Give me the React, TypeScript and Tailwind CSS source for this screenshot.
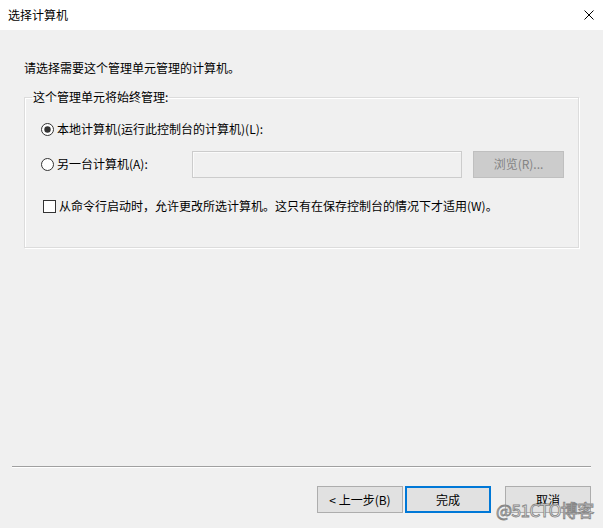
import React from 'react'

const font = { fontFamily: '"Microsoft YaHei UI", "Noto Sans CJK SC", "Noto Sans", sans-serif' }

function Radio({ checked }: { checked?: boolean }) {
  return (
    <svg width="13" height="13" viewBox="0 0 13 13" className="shrink-0">
      <circle cx="6.5" cy="6.5" r="6" fill="#fff" stroke="#333" strokeWidth="1" />
      {checked && <circle cx="6.5" cy="6.5" r="3.2" fill="#333" />}
    </svg>
  )
}

function Btn({ children, primary, disabled, className = '' }: { children: React.ReactNode; primary?: boolean; disabled?: boolean; className?: string }) {
  let cls = 'border border-[#adadad] bg-[#e1e1e1] text-black'
  if (primary) cls = 'border-2 border-[#0078d7] bg-[#e1e1e1] text-black'
  if (disabled) cls = 'border border-[#bfbfbf] bg-[#cccccc] text-[#838383]'
  return (
    <div className={`flex h-[27px] w-[86px] items-center justify-center text-[12px] leading-[16px] ${cls} ${className}`}>
      {children}
    </div>
  )
}

export default function App() {
  return (
    <div className="relative flex h-[528px] w-[603px] flex-col bg-[#f0f0f0] text-[12px] text-black" style={font}>
      {/* 標題列 */}
      <div className="flex h-[30px] shrink-0 items-center justify-between bg-white pl-[8px] pr-[9px]">
        <span className="leading-[16px]">选择计算机</span>
        <svg width="10" height="10" viewBox="0 0 10 10">
          <path d="M0.5 0.5 L9.5 9.5 M9.5 0.5 L0.5 9.5" stroke="#000" strokeWidth="1" />
        </svg>
      </div>

      <div className="ml-[24px] mt-[30px] leading-[16px]">请选择需要这个管理单元管理的计算机。</div>

      <fieldset className="ml-[24px] mt-[13px] w-[555px] border border-[#dcdcdc] pb-[33px] shadow-[inset_1px_1px_0_#fff,1px_1px_0_#fff]">
        <legend className="ml-[7px] px-[1px] leading-[16px]">这个管理单元将始终管理:</legend>

        <div className="pl-[16px]">
          <div className="mt-[16px] flex h-[16px] items-center gap-[3px] leading-[16px]">
            <Radio checked />
            <span>本地计算机(运行此控制台的计算机)(L):</span>
          </div>

          <div className="mt-[13px] flex h-[28px] items-center">
            <div className="flex w-[151px] items-center gap-[3px] leading-[16px]">
              <Radio />
              <span>另一台计算机(A):</span>
            </div>
            <div className="h-[27px] w-[270px] border border-[#cccccc] bg-[#f0f0f0] shadow-[inset_1px_1px_0_#fafafa]" />
            <Btn disabled className="ml-[11px] w-[91px]">浏览(R)...</Btn>
          </div>

          <div className="mt-[20px] flex h-[16px] items-center gap-[3px] pl-[2px] leading-[16px]">
            <div className="h-[13px] w-[13px] shrink-0 border border-[#333] bg-white" />
            <span>从命令行启动时，允许更改所选计算机。这只有在保存控制台的情况下才适用(W)。</span>
          </div>
        </div>
      </fieldset>

      <div className="mt-auto">
        <div className="mx-[12px] h-px bg-[#a0a0a0]" />
        <div className="mx-[12px] h-px bg-white" />
        <div className="mb-[15px] mt-[18px] flex justify-end pr-[12px]">
          <Btn>&lt;&nbsp;上一步(B)</Btn>
          <Btn primary className="ml-[2px]">完成</Btn>
          <Btn className="ml-[14px]">取消</Btn>
        </div>
      </div>

      {/* 水印 */}
      <div className="absolute left-[496px] top-[499px] text-[17px] leading-[22px] tracking-[-0.5px] text-white [-webkit-text-stroke:0.9px_#888]" style={{ fontFamily: '"Noto Sans CJK SC", sans-serif' }}>
        @51CTO博客
      </div>
    </div>
  )
}
